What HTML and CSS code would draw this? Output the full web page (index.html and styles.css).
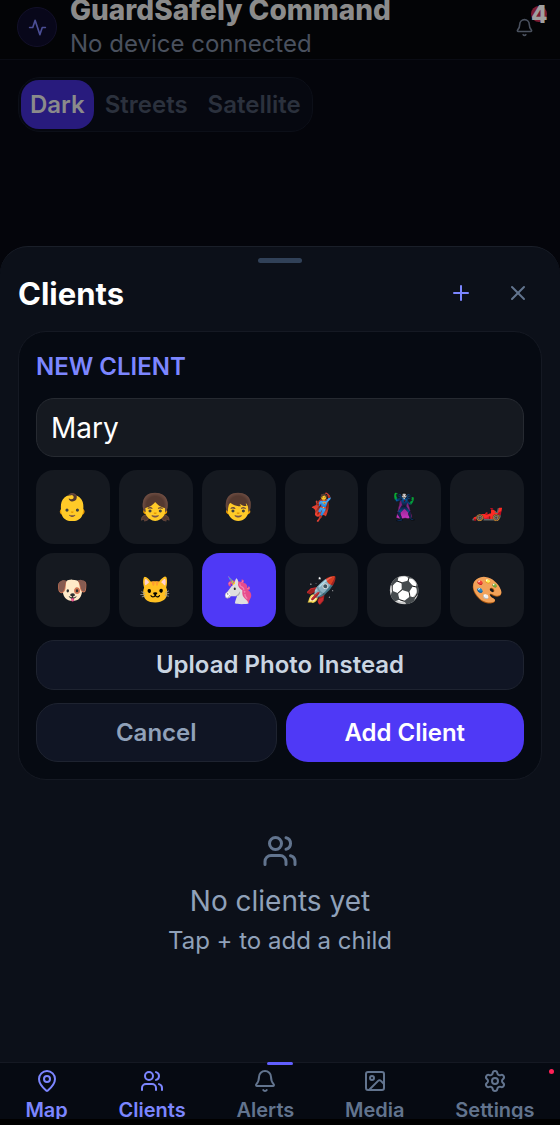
FILE: index.html
```
<!DOCTYPE html>
<html lang="en">

<head>
    <meta charset="UTF-8">
    <meta name="viewport" content="width=device-width, initial-scale=1.0">
    <title>GuardSafely Command</title>
    <link rel="stylesheet" href="styles.css">
</head>

<body>
    <div class="app">
        <!-- Header -->
        <header class="header">
            <div class="logo">
                <svg class="icon icon-small" viewBox="0 0 24 24"><path d="M22 12h-4l-3 9L9 3l-3 9H2"/></svg>
            </div>
            <div class="header-text">
                <h1 class="title">GuardSafely Command</h1>
                <p class="status">No device connected</p>
            </div>
            <button class="bell" aria-label="Notifications">
                <svg class="icon icon-small" viewBox="0 0 24 24"><path d="M10.268 21a2 2 0 0 0 3.464 0"/><path d="M3.262 15.326A1 1 0 0 0 4 17h16a1 1 0 0 0 .74-1.673C19.41 13.956 18 12.499 18 8A6 6 0 0 0 6 8c0 4.499-1.411 5.956-2.738 7.326"/></svg>
                <span class="badge">4</span>
            </button>
        </header>

        <!-- Map -->
        <section class="map">
            <div class="styles">
                <button class="style active">Dark</button>
                <button class="style">Streets</button>
                <button class="style">Satellite</button>
            </div>
        </section>

        <!-- Clients sheet -->
        <main class="sheet">
            <div class="handle"></div>
            <div class="sheet-header">
                <h2 class="sheet-title">Clients</h2>
                <button class="icon-button add" aria-label="Add client">
                    <svg class="icon icon-medium" viewBox="0 0 24 24"><path d="M5 12h14"/><path d="M12 5v14"/></svg>
                </button>
                <button class="icon-button" aria-label="Close">
                    <svg class="icon icon-medium" viewBox="0 0 24 24"><path d="M18 6 6 18"/><path d="m6 6 12 12"/></svg>
                </button>
            </div>

            <form class="card">
                <label class="card-label" for="clientName">NEW CLIENT</label>
                <input class="name-input" type="text" id="clientName" value="Mary">
                <div class="avatars">
                    <button type="button" class="avatar">👶</button>
                    <button type="button" class="avatar">👧</button>
                    <button type="button" class="avatar">👦</button>
                    <button type="button" class="avatar">🦸</button>
                    <button type="button" class="avatar">🦹</button>
                    <button type="button" class="avatar">🏎️</button>
                    <button type="button" class="avatar">🐶</button>
                    <button type="button" class="avatar">🐱</button>
                    <button type="button" class="avatar selected">🦄</button>
                    <button type="button" class="avatar">🚀</button>
                    <button type="button" class="avatar">⚽</button>
                    <button type="button" class="avatar">🎨</button>
                </div>
                <button type="button" class="button upload">Upload Photo Instead</button>
                <div class="actions">
                    <button type="button" class="button cancel">Cancel</button>
                    <button type="button" class="button primary">Add Client</button>
                </div>
            </form>

            <div class="empty">
                <svg class="icon icon-large" viewBox="0 0 24 24"><path d="M16 21v-2a4 4 0 0 0-4-4H6a4 4 0 0 0-4 4v2"/><circle cx="9" cy="7" r="4"/><path d="M22 21v-2a4 4 0 0 0-3-3.87"/><path d="M16 3.13a4 4 0 0 1 0 7.75"/></svg>
                <p class="empty-title">No clients yet</p>
                <p class="empty-hint">Tap + to add a child</p>
            </div>
        </main>

        <!-- Bottom navigation -->
        <nav class="nav">
            <div class="nav-items">
                <a class="nav-item active" href="#map">
                    <svg class="icon icon-nav" viewBox="0 0 24 24"><path d="M20 10c0 4.993-5.539 10.193-7.399 11.799a1 1 0 0 1-1.202 0C9.539 20.193 4 14.993 4 10a8 8 0 0 1 16 0"/><circle cx="12" cy="10" r="3"/></svg>
                    Map
                </a>
                <a class="nav-item active" href="#clients">
                    <svg class="icon icon-nav" viewBox="0 0 24 24"><path d="M16 21v-2a4 4 0 0 0-4-4H6a4 4 0 0 0-4 4v2"/><circle cx="9" cy="7" r="4"/><path d="M22 21v-2a4 4 0 0 0-3-3.87"/><path d="M16 3.13a4 4 0 0 1 0 7.75"/></svg>
                    Clients
                </a>
                <a class="nav-item" href="#alerts">
                    <svg class="icon icon-nav" viewBox="0 0 24 24"><path d="M10.268 21a2 2 0 0 0 3.464 0"/><path d="M3.262 15.326A1 1 0 0 0 4 17h16a1 1 0 0 0 .74-1.673C19.41 13.956 18 12.499 18 8A6 6 0 0 0 6 8c0 4.499-1.411 5.956-2.738 7.326"/></svg>
                    Alerts
                </a>
                <a class="nav-item" href="#media">
                    <svg class="icon icon-nav" viewBox="0 0 24 24"><rect x="3" y="3" width="18" height="18" rx="2"/><circle cx="9" cy="9" r="2"/><path d="m21 15-3.086-3.086a2 2 0 0 0-2.828 0L6 21"/></svg>
                    Media
                </a>
                <a class="nav-item" href="#settings">
                    <svg class="icon icon-nav" viewBox="0 0 24 24"><path d="M9.671 4.136a2.34 2.34 0 0 1 4.659 0 2.34 2.34 0 0 0 3.319 1.915 2.34 2.34 0 0 1 2.33 4.033 2.34 2.34 0 0 0 0 3.831 2.34 2.34 0 0 1-2.33 4.033 2.34 2.34 0 0 0-3.319 1.915 2.34 2.34 0 0 1-4.659 0 2.34 2.34 0 0 0-3.32-1.915 2.34 2.34 0 0 1-2.33-4.033 2.34 2.34 0 0 0 0-3.831A2.34 2.34 0 0 1 6.35 6.051a2.34 2.34 0 0 0 3.319-1.915"/><circle cx="12" cy="12" r="3"/></svg>
                    Settings
                </a>
            </div>
            <span class="indicator"></span>
            <span class="dot"></span>
        </nav>
    </div>
</body>

</html>
```

FILE: styles.css
```
* {
    box-sizing: border-box;
}

body {
    font-family: Inter, "Noto Color Emoji", sans-serif;
    background-color: #000;
    color: #fff;
    margin: 0;
}

h1,
h2,
p {
    margin: 0;
}

button,
input {
    font-family: inherit;
    margin: 0;
}

button {
    border: none;
    padding: 0;
    background: none;
    cursor: pointer;
}

.app {
    display: flex;
    flex-direction: column;
    min-height: 100vh;
    padding-bottom: 6px;
    background-color: #04050b;
}

.icon {
    display: block;
    flex-shrink: 0;
    fill: none;
    stroke: currentColor;
    stroke-width: 2;
    stroke-linecap: round;
    stroke-linejoin: round;
}

.icon-small {
    width: 19px;
    height: 19px;
}

.icon-medium {
    width: 24px;
    height: 24px;
}

.icon-nav {
    width: 24px;
    height: 24px;
}

.icon-large {
    width: 36px;
    height: 36px;
}

/* Header */
.header {
    display: flex;
    align-items: center;
    gap: 13px;
    height: 60px;
    padding: 0 17px 5px;
    overflow: hidden;
    background-color: #030406;
    border-bottom: 1px solid #0a0c14;
}

.logo {
    display: flex;
    align-items: center;
    justify-content: center;
    width: 40px;
    height: 40px;
    border-radius: 50%;
    border: 1px solid #121029;
    background-color: #08071a;
    color: #4b4e95;
}

.header-text {
    flex: 1;
}

.title {
    font-size: 28px;
    font-weight: 800;
    line-height: 34px;
    color: #8b8b8b;
}

.status {
    font-size: 24px;
    line-height: 34px;
    color: #4a515e;
}

.bell {
    position: relative;
    padding: 9px;
    color: #4a515e;
}

.badge {
    position: absolute;
    top: -3px;
    right: -4px;
    width: 16px;
    height: 16px;
    border-radius: 50%;
    background-color: #7d1c32;
    color: #a0a0a0;
    font-size: 24px;
    font-weight: 800;
    line-height: 17px;
    text-align: center;
}

/* Map */
.map {
    height: 186px;
    padding: 17px 18px;
}

.styles {
    display: inline-flex;
    gap: 2px;
    padding: 2px;
    border: 1px solid #0c0f18;
    border-radius: 22px;
    background-color: #060810;
}

.style {
    height: 49px;
    padding: 0 9px;
    border-radius: 18px;
    font-size: 24px;
    font-weight: 600;
    color: #2b313d;
}

.style.active {
    background-color: #281b7d;
    color: #8b8b8b;
}

/* Sheet */
.sheet {
    flex: 1;
    padding: 11px 18px 0;
    border-top: 1px solid #1a1f29;
    border-radius: 28px 28px 0 0;
    background-color: #0c1019;
}

.handle {
    width: 44px;
    height: 5px;
    margin: 0 auto;
    border-radius: 3px;
    background-color: #314158;
}

.sheet-header {
    display: flex;
    align-items: center;
    gap: 9px;
    height: 60px;
    margin-bottom: 8px;
}

.sheet-title {
    flex: 1;
    font-size: 31px;
    font-weight: 700;
}

.icon-button {
    display: flex;
    align-items: center;
    justify-content: center;
    width: 48px;
    height: 48px;
    color: #62748e;
}

.icon-button.add {
    color: #7c86ff;
}

.card {
    display: flex;
    flex-direction: column;
    gap: 13px;
    padding: 17px;
    border: 1px solid #151923;
    border-radius: 28px;
    background-color: #060a12;
}

.card-label {
    font-size: 24px;
    font-weight: 600;
    line-height: 36px;
    color: #7c86ff;
}

.name-input {
    width: 100%;
    height: 59px;
    padding: 0 14px;
    border: 1px solid #262a31;
    border-radius: 18px;
    background-color: #151920;
    color: #fff;
    font-size: 28px;
    outline: none;
}

.avatars {
    display: grid;
    grid-template-columns: repeat(6, 1fr);
    gap: 9px;
}

.avatar {
    aspect-ratio: 1;
    border-radius: 18px;
    background-color: #151920;
    font-size: 26px;
    color: #fff;
}

.avatar.selected {
    background-color: #4f39f6;
}

.button {
    height: 59px;
    border-radius: 22px;
    font-size: 24px;
    font-weight: 600;
}

.upload {
    height: 50px;
    border: 1px solid #1e2330;
    border-radius: 18px;
    background-color: #101524;
    color: #cad5e2;
}

.actions {
    display: flex;
    gap: 9px;
}

.actions .button {
    flex: 1;
}

.cancel {
    border: 1px solid #1e2330;
    background-color: #101524;
    color: #90a1b9;
}

.primary {
    background-color: #4f39f6;
    color: #fff;
}

.empty {
    display: flex;
    flex-direction: column;
    align-items: center;
    padding: 53px 0;
}

.empty-title {
    margin-top: 11px;
    font-size: 28px;
    line-height: 42px;
    color: #90a1b9;
}

.empty-hint {
    font-size: 24px;
    line-height: 38px;
    color: #90a1b9;
}

.empty .icon {
    color: #62748e;
}

/* Bottom navigation */
.nav {
    position: relative;
    background-color: #060a12;
    border-top: 1px solid #151923;
    box-shadow: 0 6px #000;
}

.nav-items {
    display: flex;
    justify-content: space-around;
    height: 56px;
    padding-top: 6px;
    overflow: hidden;
}

.nav-item {
    display: flex;
    flex-direction: column;
    align-items: center;
    gap: 4px;
    font-size: 20px;
    font-weight: 600;
    line-height: 26px;
    color: #62748e;
    text-decoration: none;
}

.nav-item.active {
    color: #7c86ff;
}

.indicator {
    position: absolute;
    top: -1px;
    left: 50%;
    width: 26px;
    height: 3px;
    margin-left: -13px;
    border-radius: 2px;
    background-color: #615fff;
}

.dot {
    position: absolute;
    top: 6px;
    right: 6px;
    width: 5px;
    height: 5px;
    border-radius: 50%;
    background-color: #ff2056;
}
```
